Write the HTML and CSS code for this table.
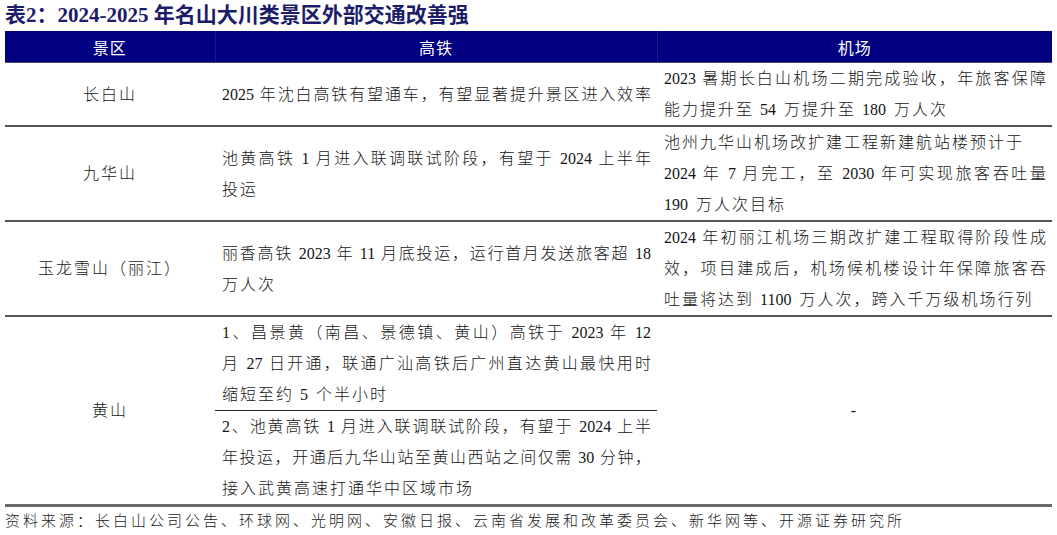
FILE: index.html
```html
<!DOCTYPE html>
<html lang="zh-CN">
<head>
<meta charset="utf-8">
<title>表2</title>
<link rel="stylesheet" href="styles.css">
</head>
<body>
<h1 class="title">表2：2024-2025 年名山大川类景区外部交通改善强</h1>
<table class="tbl">
  <colgroup><col class="c1"><col class="c2"><col class="c3"></colgroup>
  <thead>
    <tr><th>景区</th><th>高铁</th><th>机场</th></tr>
  </thead>
  <tbody>
    <tr>
      <td class="place">长白山</td>
      <td class="txt"><span class="ln full">2025 年沈白高铁有望通车，有望显著提升景区进入效率</span></td>
      <td class="txt"><span class="ln full">2023 暑期长白山机场二期完成验收，年旅客保障</span><span class="ln">能力提升至 <span class="n">54</span> 万提升至 <span class="n">180</span> 万人次</span></td>
    </tr>
    <tr>
      <td class="place">九华山</td>
      <td class="txt"><span class="ln full">池黄高铁 1 月进入联调联试阶段，有望于 2024 上半年</span><span class="ln">投运</span></td>
      <td class="txt"><span class="ln">池州九华山机场改扩建工程新建航站楼预计于</span><span class="ln full">2024 年 7 月完工，至 2030 年可实现旅客吞吐量</span><span class="ln"><span class="n">190</span> 万人次目标</span></td>
    </tr>
    <tr>
      <td class="place">玉龙雪山（丽江）</td>
      <td class="txt"><span class="ln full">丽香高铁 2023 年 11 月底投运，运行首月发送旅客超 18</span><span class="ln">万人次</span></td>
      <td class="txt"><span class="ln full">2024 年初丽江机场三期改扩建工程取得阶段性成</span><span class="ln full">效，项目建成后，机场候机楼设计年保障旅客吞</span><span class="ln">吐量将达到 <span class="n">1100</span> 万人次，跨入千万级机场行列</span></td>
    </tr>
    <tr class="sub">
      <td class="place last" rowspan="2">黄山</td>
      <td class="txt split"><span class="ln full">1、昌景黄（南昌、景德镇、黄山）高铁于 2023 年 12</span><span class="ln full">月 27 日开通，联通广汕高铁后广州直达黄山最快用时</span><span class="ln">缩短至约 <span class="n">5</span> 个半小时</span></td>
      <td class="place last" rowspan="2">-</td>
    </tr>
    <tr>
      <td class="txt last"><span class="ln full">2、池黄高铁 1 月进入联调联试阶段，有望于 2024 上半</span><span class="ln full">年投运，开通后九华山站至黄山西站之间仅需 30 分钟，</span><span class="ln">接入武黄高速打通华中区域市场</span></td>
    </tr>
  </tbody>
</table>
<p class="src">资料来源：长白山公司公告、环球网、光明网、安徽日报、云南省发展和改革委员会、新华网等、开源证券研究所</p>
</body>
</html>
```

FILE: styles.css
```css
html, body {
  margin: 0;
  padding: 0;
  background: #ffffff;
}

body {
  font-family: "Liberation Serif", "Noto Sans CJK SC", serif;
  color: #151515;
}

.title {
  margin: 0;
  padding: 1px 0 0 5px;
  height: 30px;
  font-size: 21px;
  line-height: 29px;
  font-weight: 700;
  color: #1c1c6a;
  white-space: nowrap;
}

.tbl {
  margin-left: 5px;
  width: 1047px;
  border-collapse: collapse;
  table-layout: fixed;
  font-size: 16px;
  letter-spacing: 2px;
}

.c1 { width: 210px; }
.c2 { width: 442px; }
.c3 { width: 395px; }

.tbl th {
  height: 31px;
  padding: 0;
  background: #000080;
  color: #ffffff;
  font-weight: 400;
  letter-spacing: 1px;
  border-bottom: 1px solid #4a4a5a;
  text-align: center;
  vertical-align: middle;
}

.tbl th + th {
  border-left: 1px solid #18188c;
}

.tbl td {
  padding: 0 6px 0 7px;
  line-height: 31px;
  font-weight: 300;
  vertical-align: middle;
  border-bottom: 2px solid #555555;
}

.tbl td.place {
  text-align: center;
  padding: 0;
}

.tbl td.split {
  border-bottom: 1px solid #222222;
}

.tbl td.last {
  border-bottom: 3px solid #6a6a6a;
}

.ln {
  display: block;
  white-space: nowrap;
}

.ln.full {
  letter-spacing: 0;
  text-align: justify;
  text-align-last: justify;
}

.n {
  letter-spacing: 0;
  margin-right: 2px;
}

.src {
  margin: 4px 0 0 5px;
  font-size: 15px;
  line-height: 20px;
  font-weight: 300;
  letter-spacing: 3px;
  color: #1a1a1a;
  white-space: nowrap;
}
```
